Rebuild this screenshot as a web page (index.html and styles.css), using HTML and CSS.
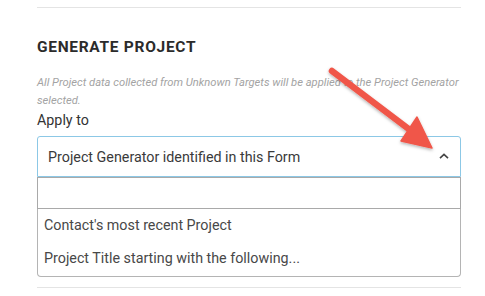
FILE: index.html
```html
<!DOCTYPE html>
<html>
<head>
<meta charset="utf-8">
<link rel="stylesheet" href="styles.css">
</head>
<body>
<div class="page">
  <div class="rule"></div>
  <h2 class="title">GENERATE PROJECT</h2>
  <p class="desc">All Project data collected from Unknown Targets will be applied to the Project Generator selected.</p>
  <div class="label">Apply to</div>
  <div class="select">
    <span class="select-value">Project Generator identified in this Form</span>
    <svg class="chevron" width="10" height="6" viewBox="0 0 10 6"><path d="M1 5.2 L5 1.4 L9 5.2" fill="none" stroke="#444" stroke-width="1.6"/></svg>
  </div>
  <div class="dropdown">
    <div class="search"></div>
    <div class="option">Contact's most recent Project</div>
    <div class="option">Project Title starting with the following...</div>
  </div>
  <div class="rule bottom"></div>
</div>
<svg class="arrow" width="485" height="296" viewBox="0 0 485 296">
  <defs>
    <filter id="sh" x="-20%" y="-20%" width="140%" height="140%">
      <feDropShadow dx="0" dy="1.5" stdDeviation="1.5" flood-color="#000" flood-opacity="0.3"/>
    </filter>
  </defs>
  <g filter="url(#sh)">
    <line x1="332" y1="71" x2="410" y2="130" stroke="#f0574a" stroke-width="6.5" stroke-linecap="round"/>
    <path d="M417 117 L432 148 L401 141 Z" fill="#f0574a" stroke="#f0574a" stroke-width="1.5" stroke-linejoin="round"/>
  </g>
</svg>
</body>
</html>
```
FILE: styles.css
```css
* { box-sizing: border-box; }
html, body { margin: 0; padding: 0; background: #fff; }
body { font-family: Roboto, "Liberation Sans", sans-serif; color: #333; }
.page { padding: 7px 24px 0 37px; width: 485px; }
.rule { height: 1px; background: #e4e4e4; }
.rule.bottom { margin-top: 10px; }
.title {
  margin: 30px 0 0;
  font-size: 15.5px;
  line-height: 18px;
  font-weight: 700;
  letter-spacing: 0.7px;
  color: #2b2b2b;
}
.desc {
  margin: 18px 0 0;
  font-size: 11.2px;
  line-height: 18px;
  font-style: italic;
  color: #a3a3a3;
}
.label {
  margin-top: 2px;
  font-size: 14.3px;
  line-height: 17px;
  color: #333;
}
.select {
  margin-top: 7px;
  height: 41px;
  border: 1px solid #8cc8e6;
  border-radius: 3px 3px 0 0;
  display: flex;
  align-items: center;
  justify-content: space-between;
  padding: 0 10px 0 10px;
}
.select-value { font-size: 14.3px; color: #3a3a3a; }
.chevron { display: block; margin-top: -2px; margin-right: 1px; }
.dropdown {
  border: 1px solid #b4b4b4;
  border-top: none;
  border-radius: 0 0 4px 4px;
  padding-bottom: 1px;
}
.search {
  height: 32px;
  border: 1px solid #a9a9a9;
  margin: 0 -1px;
}
.option {
  font-size: 14.3px;
  line-height: 33px;
  padding-left: 6px;
  color: #484848;
}
.arrow { position: absolute; left: 0; top: 0; pointer-events: none; }
```
